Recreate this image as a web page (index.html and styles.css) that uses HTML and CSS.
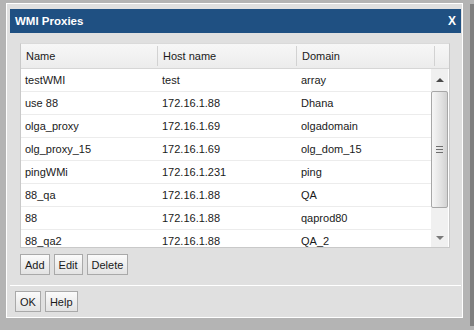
FILE: index.html
```html
<!DOCTYPE html>
<html lang="en">
<head>
    <meta charset="UTF-8">
    <title>WMI Proxies</title>
    <link rel="stylesheet" href="styles.css">
</head>
<body>
<div class="frame">
    <div class="dialog">
        <div class="title">
            <span>WMI Proxies</span>
            <span class="close">X</span>
        </div>
        <div class="content">
            <div class="grid">
                <div class="head">
                    <div class="col c1">Name</div>
                    <div class="col c2">Host name</div>
                    <div class="col c3">Domain</div>
                    <div class="col c4"></div>
                </div>
                <div class="body">
                    <div class="rows">
                        <div class="row"><div class="c1">testWMI</div><div class="c2">test</div><div class="c3">array</div></div>
                        <div class="row"><div class="c1">use 88</div><div class="c2">172.16.1.88</div><div class="c3">Dhana</div></div>
                        <div class="row"><div class="c1">olga_proxy</div><div class="c2">172.16.1.69</div><div class="c3">olgadomain</div></div>
                        <div class="row"><div class="c1">olg_proxy_15</div><div class="c2">172.16.1.69</div><div class="c3">olg_dom_15</div></div>
                        <div class="row"><div class="c1">pingWMi</div><div class="c2">172.16.1.231</div><div class="c3">ping</div></div>
                        <div class="row"><div class="c1">88_qa</div><div class="c2">172.16.1.88</div><div class="c3">QA</div></div>
                        <div class="row"><div class="c1">88</div><div class="c2">172.16.1.88</div><div class="c3">qaprod80</div></div>
                        <div class="row"><div class="c1">88_qa2</div><div class="c2">172.16.1.88</div><div class="c3">QA_2</div></div>
                    </div>
                    <div class="scroll">
                        <div class="arrow up"></div>
                        <div class="thumb"><div class="grip"></div></div>
                        <div class="track"></div>
                        <div class="arrow down"></div>
                    </div>
                </div>
            </div>
            <div class="buttons">
                <button>Add</button>
                <button>Edit</button>
                <button>Delete</button>
            </div>
        </div>
        <div class="footer">
            <button>OK</button>
            <button>Help</button>
        </div>
    </div>
</div>
</body>
</html>
```

FILE: styles.css
```css
body {
    margin: 0;
    background: #b4b4b4;
    font-family: "Liberation Sans", Arial, sans-serif;
    font-size: 11px;
    color: #1a1a1a;
}

.frame {
    width: 470px;
    height: 326px;
    padding: 3px 0 0 6px;
    box-sizing: border-box;
    background: #b4b4b4;
    box-shadow: 4px 4px 0 #7f7f7f;
}

.dialog {
    width: 457px;
    height: 315px;
    box-sizing: border-box;
    border: 1px solid #fff;
    background: #e0e0e0;
    padding: 5px 1px 0 3px;
}

.title {
    height: 24px;
    background: #1f5082;
    color: #fff;
    font-weight: bold;
    font-size: 11.5px;
    display: flex;
    align-items: center;
    justify-content: space-between;
    padding: 0 5px;
}

.title .close {
    font-size: 12px;
}

.content {
    padding: 10px 11px 10px 10px;
    border-bottom: 1px solid #fff;
}

.grid {
    height: 205px;
    box-sizing: border-box;
    border: 1px solid #c9c9c9;
    border-top-color: #dadada;
    background: #fff;
    overflow: hidden;
}

.head {
    display: flex;
    height: 24px;
    background: linear-gradient(#f7f7f7, #ececec);
    border-bottom: 1px solid #d6d6d6;
}

.head .col {
    display: flex;
    align-items: center;
    padding-left: 5px;
    box-sizing: border-box;
    border-right: 1px solid #d2d2d2;
    margin: 2px 0;
}

.c1 { width: 137px; }
.c2 { width: 139px; }
.c3 { width: 138px; }
.head .c4 { flex: 1; border-right: none; }

.body {
    display: flex;
}

.rows {
    width: 410px;
}

.row {
    display: flex;
    height: 23px;
    box-sizing: border-box;
    border-bottom: 1px solid #ececec;
    align-items: center;
}

.row div {
    padding-left: 4px;
    box-sizing: border-box;
}

.row .c3 { width: 134px; }

.scroll {
    width: 17px;
    height: 180px;
    background: #f0f0f0;
    display: flex;
    flex-direction: column;
}

.arrow {
    height: 22px;
    display: flex;
    align-items: center;
    justify-content: center;
}

.arrow::after {
    content: "";
    border-left: 4px solid transparent;
    border-right: 4px solid transparent;
}

.arrow.up::after {
    border-bottom: 4px solid #4a4a4a;
}

.arrow.down {
    height: 40px;
    align-items: flex-start;
    padding-top: 27px;
    box-sizing: border-box;
}

.arrow.down::after {
    border-top: 4px solid #7a7a7a;
}

.thumb {
    height: 117px;
    box-sizing: border-box;
    border: 1px solid #a7a7a7;
    border-radius: 2px;
    background: linear-gradient(to right, #f6f6f6, #e2e2e2 60%, #d2d2d2);
    display: flex;
    align-items: center;
    justify-content: center;
}

.grip {
    width: 7px;
    height: 5px;
    border-top: 1px solid #6e6e6e;
    border-bottom: 1px solid #6e6e6e;
    position: relative;
}

.grip::after {
    content: "";
    position: absolute;
    left: 0;
    right: 0;
    top: 2px;
    border-top: 1px solid #6e6e6e;
}

.track {
    flex: 1;
}

.buttons {
    display: flex;
    gap: 4px;
    margin-top: 6px;
}

.footer {
    display: flex;
    gap: 4px;
    padding: 5px 0 0 5px;
}

button {
    height: 21px;
    padding: 0 4px;
    font-family: "Liberation Sans", Arial, sans-serif;
    font-size: 11px;
    color: #1a1a1a;
    border: 1px solid #a9a9a9;
    border-radius: 0;
    background: linear-gradient(#fbfbfb, #e3e3e3);
}
```
